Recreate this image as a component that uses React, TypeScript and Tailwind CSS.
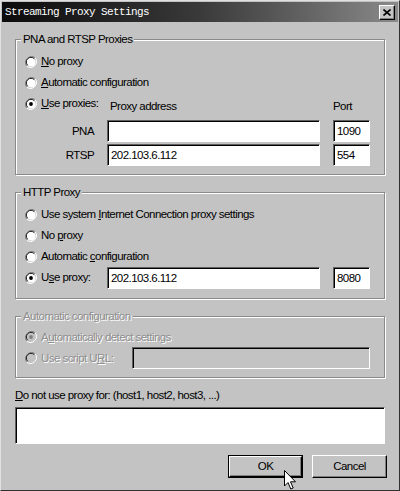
import React from 'react';

const FACE = 'bg-[#c3c3c3]';

const Radio: React.FC<{ checked?: boolean; disabled?: boolean }> = ({ checked, disabled }) => (
  <svg width="12" height="12" viewBox="0 0 12 12" className="shrink-0">
    <path d="M10.2 1.8 A6 6 0 0 0 1.8 10.2" fill="none" stroke="#808080" strokeWidth="1" />
    <path d="M1.8 10.2 A6 6 0 0 0 10.2 1.8" fill="none" stroke="#ffffff" strokeWidth="1" />
    <circle cx="6" cy="6" r="4.6" fill={disabled ? '#c3c3c3' : '#ffffff'} />
    <path d="M9.3 2.7 A4.6 4.6 0 0 0 2.7 9.3" fill="none" stroke="#202020" strokeWidth="1" />
    {checked && <circle cx="6" cy="6" r="1.9" fill={disabled ? '#808080' : '#000000'} />}
  </svg>
);

const Option: React.FC<{
  checked?: boolean;
  disabled?: boolean;
  className?: string;
  children: React.ReactNode;
}> = ({ checked, disabled, className = '', children }) => (
  <div className={`flex h-[21px] shrink-0 items-center ${className}`}>
    <Radio checked={checked} disabled={disabled} />
    <span
      className={`ml-[4px] whitespace-nowrap ${
        disabled ? 'text-[#8e8e8e] [text-shadow:1px_1px_0_#fff]' : 'text-black'
      }`}
    >
      {children}
    </span>
  </div>
);

const Field: React.FC<{ value?: string; className?: string; disabled?: boolean }> = ({
  value = '',
  className = '',
  disabled,
}) => (
  <div
    className={`h-[22px] shrink-0 border border-t-[#606060] border-l-[#606060] border-r-white border-b-white shadow-[inset_1px_1px_0_#000] ${
      disabled ? 'bg-[#c3c3c3]' : 'bg-white'
    } flex items-center pl-[3px] pt-[1px] ${className}`}
  >
    {value}
  </div>
);

const Group: React.FC<{
  title: string;
  disabled?: boolean;
  className?: string;
  children: React.ReactNode;
}> = ({ title, disabled, className = '', children }) => (
  <fieldset
    className={`mx-[14px] border border-[#8a8a8a] shadow-[1px_1px_0_#fff,inset_1px_1px_0_#fff] ${className}`}
  >
    <legend
      className={`-ml-[4px] px-[2px] ${FACE} ${
        disabled ? 'text-[#8e8e8e] [text-shadow:1px_1px_0_#fff]' : 'text-black'
      }`}
    >
      {title}
    </legend>
    {children}
  </fieldset>
);

const Button: React.FC<{ label: string; isDefault?: boolean }> = ({ label, isDefault }) => (
  <div
    className={`flex h-[23px] w-[75px] items-center justify-center ${
      isDefault ? 'border border-black' : ''
    }`}
  >
    <div className="flex h-full w-full items-center justify-center border border-t-white border-l-white border-r-black border-b-black shadow-[inset_-1px_-1px_0_#808080]">
      {label}
    </div>
  </div>
);

export default function App() {
  return (
    <div
      className={`relative h-[491px] w-[400px] overflow-hidden ${FACE} border border-t-[#e0e0e0] border-l-[#e0e0e0] border-r-[#303030] border-b-[#303030] font-['Liberation_Sans',Arial,sans-serif] text-[11.5px] tracking-[-0.55px] text-black`}
    >
      {/* title bar */}
      <div className="mx-[1px] mt-[1px] flex h-[20px] items-center bg-gradient-to-r from-[#0c0c0c] via-[#3a3a3a] to-[#8a8a8a] pl-[3px] pr-[3px]">
        <span className="font-['Liberation_Mono',monospace] text-[11px] tracking-[-0.6px] text-white">
          Streaming Proxy Settings
        </span>
        <div className="ml-auto flex h-[15px] w-[16px] items-center justify-center border border-t-white border-l-white border-r-black border-b-black bg-[#c3c3c3] shadow-[inset_-1px_-1px_0_#808080]">
          <svg width="8" height="7" viewBox="0 0 8 7">
            <path d="M0.5 0.5 L7.5 6.5 M7.5 0.5 L0.5 6.5" stroke="#000" strokeWidth="1.6" />
          </svg>
        </div>
      </div>

      <div className="pt-[9px]">
        <Group title="PNA and RTSP Proxies" className="pb-[8px] pl-[9px]">
          <div className="pt-[3px]">
            <Option>
              <span className="underline">N</span>o proxy
            </Option>
            <Option>
              <span className="underline">A</span>utomatic configuration
            </Option>
            <div className="flex h-[21px] items-center">
              <Option checked className="w-[85px]">
                <span className="underline">U</span>se proxies:
              </Option>
              <span className="mt-[6px] w-[223px] shrink-0 whitespace-nowrap">Proxy address</span>
              <span className="mt-[6px] whitespace-nowrap">Port</span>
            </div>
          </div>
          <div className="mt-[6px] flex flex-col gap-[2px]">
            <div className="flex items-center">
              <span className="w-[69px] text-right">PNA</span>
              <Field className="ml-[13px] w-[213px]" />
              <Field className="ml-[13px] w-[37px]" value="1090" />
            </div>
            <div className="flex items-center">
              <span className="w-[69px] text-right">RTSP</span>
              <Field className="ml-[13px] w-[213px]" value="202.103.6.112" />
              <Field className="ml-[13px] w-[37px]" value="554" />
            </div>
          </div>
        </Group>

        <Group title="HTTP Proxy" className="mt-[9px] pb-[9px] pl-[9px]">
          <div className="pt-[3px]">
            <Option>
              Use system <span className="underline">I</span>nternet Connection proxy settings
            </Option>
            <Option>
              No <span className="underline">p</span>roxy
            </Option>
            <Option>
              Automatic <span className="underline">c</span>onfiguration
            </Option>
            <div className="flex h-[21px] items-center">
              <Option checked className="w-[82px]">
                U<span className="underline">s</span>e proxy:
              </Option>
              <Field className="w-[213px]" value="202.103.6.112" />
              <Field className="ml-[13px] w-[37px]" value="8080" />
            </div>
          </div>
        </Group>

        <Group title="Automatic configuration" disabled className="mt-[9px] pb-[8px] pl-[9px]">
          <div className="pt-[2px]">
            <Option checked disabled>
              A<span className="underline">u</span>tomatically detect settings
            </Option>
            <div className="flex h-[21px] items-center">
              <Option disabled className="w-[107px]">
                Use script U<span className="underline">R</span>L:
              </Option>
              <Field disabled className="w-[238px]" />
            </div>
          </div>
        </Group>

        <div className="mx-[14px] mt-[10px]">
          <div className="h-[14px] leading-[14px]">
            <span className="underline">D</span>o not use proxy for: (host1, host2, host3, ...)
          </div>
          <Field className="mt-[5px] h-[37px] w-[370px]" />
        </div>

        <div className="mr-[12px] mt-[11px] flex justify-end gap-[9px]">
          <Button label="OK" isDefault />
          <Button label="Cancel" />
        </div>
      </div>

      {/* mouse pointer */}
      <svg
        className="absolute left-[283px] top-[469px]"
        width="14"
        height="22"
        viewBox="0 0 14 22"
      >
        <path
          d="M0.5 0.5 L0.5 16 L4 12.5 L6.8 19 L9.2 18 L6.5 11.8 L11.5 11.8 Z"
          fill="#fff"
          stroke="#000"
          strokeWidth="1"
        />
      </svg>
    </div>
  );
}
